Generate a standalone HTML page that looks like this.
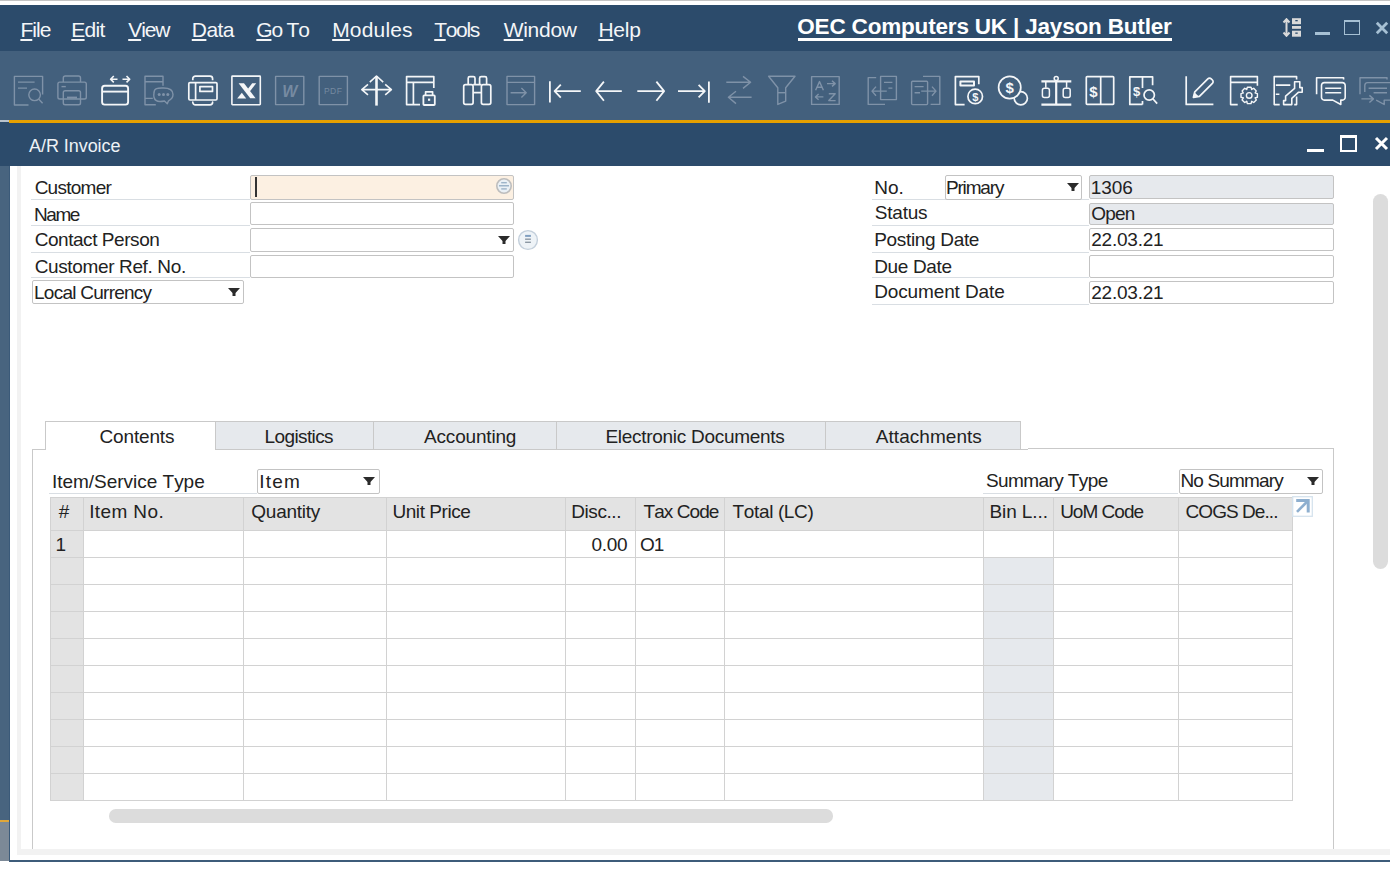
<!DOCTYPE html>
<html><head><meta charset="utf-8"><style>
html,body{margin:0;padding:0;}
body{width:1390px;height:872px;position:relative;overflow:hidden;background:#fff;font-family:"Liberation Sans", sans-serif;}
.a{position:absolute;}
.t{white-space:pre;line-height:1;font-kerning:none;}
.d{}
u{text-decoration:underline;text-underline-offset:2px;text-decoration-skip-ink:none;}
</style></head><body>
<div class="a" style="left:0px;top:0px;width:1390px;height:1px;background:#c4c4c4;"></div>
<div class="a" style="left:0px;top:1px;width:1390px;height:4px;background:#ffffff;"></div>
<div class="a" style="left:0px;top:5px;width:1390px;height:46px;background:#2c4b6b;"></div>
<div class="a" style="left:0px;top:51px;width:1390px;height:69px;background:#43607d;"></div>
<div class="a" style="left:0px;top:120px;width:9px;height:700px;background:#48647f;"></div>
<div class="a" style="left:0px;top:120px;width:9px;height:2px;background:#b9c3cc;"></div>
<div class="a" style="left:0px;top:820px;width:9px;height:2px;background:#e0a73a;"></div>
<div class="a" style="left:0px;top:822px;width:9px;height:39px;background:#7c8997;"></div>
<div class="a" style="left:0px;top:122px;width:1390px;height:44px;background:#2c4b6b;"></div>
<div class="a" style="left:9px;top:120px;width:1381px;height:3px;background:#e6a000;"></div>
<div class="a" style="left:9px;top:166px;width:1px;height:695px;background:#3b5a79;"></div>
<div class="a" style="left:9px;top:859.5px;width:1381px;height:2.5px;background:#3e5c7a;"></div>
<div class="a" style="left:10px;top:166px;width:1380px;height:693.5px;background:#ffffff;"></div>
<div class="a" style="left:17px;top:166px;width:4px;height:689px;background:#f2f2f2;"></div>
<div class="a" style="left:17px;top:849px;width:1373px;height:6px;background:#f2f2f2;"></div>
<div class="a" style="left:21px;top:166px;width:1369px;height:683px;background:#ffffff;"></div>
<div class="a t" style="left:20.38px;top:18.92px;font-size:21px;color:#f4f6f8;font-weight:normal;letter-spacing:-0.927px;"><u>F</u>ile</div>
<div class="a t" style="left:71.28px;top:18.92px;font-size:21px;color:#f4f6f8;font-weight:normal;letter-spacing:-0.703px;"><u>E</u>dit</div>
<div class="a t" style="left:128.21px;top:18.92px;font-size:21px;color:#f4f6f8;font-weight:normal;letter-spacing:-1.092px;"><u>V</u>iew</div>
<div class="a t" style="left:191.78px;top:18.92px;font-size:21px;color:#f4f6f8;font-weight:normal;letter-spacing:-0.545px;"><u>D</u>ata</div>
<div class="a t" style="left:256.34px;top:18.92px;font-size:21px;color:#f4f6f8;font-weight:normal;letter-spacing:-1.204px;"><u>G</u>o To</div>
<div class="a t" style="left:332.18px;top:18.92px;font-size:21px;color:#f4f6f8;font-weight:normal;letter-spacing:0.168px;"><u>M</u>odules</div>
<div class="a t" style="left:434.23px;top:18.92px;font-size:21px;color:#f4f6f8;font-weight:normal;letter-spacing:-1.330px;"><u>T</u>ools</div>
<div class="a t" style="left:503.71px;top:18.92px;font-size:21px;color:#f4f6f8;font-weight:normal;letter-spacing:-0.290px;"><u>W</u>indow</div>
<div class="a t" style="left:598.38px;top:18.92px;font-size:21px;color:#f4f6f8;font-weight:normal;letter-spacing:-0.195px;"><u>H</u>elp</div>
<div class="a t" style="left:797.28px;top:15.95px;font-size:22.5px;color:#ffffff;font-weight:bold;letter-spacing:-0.179px;">OEC Computers UK | Jayson Butler</div>
<div class="a" style="left:797.5px;top:38px;width:374.5px;height:2.6px;background:#ffffff;"></div>
<svg class="a" style="left:0;top:0" width="1390" height="120" viewBox="0 0 1390 120"><g fill="none" stroke="#7f92a8" stroke-width="1.4" stroke-linecap="butt" stroke-linejoin="round"><path d="M28.5 105 H14.4 V76.4 H42.6 V94.5"/><path d="M18 82.1H34.6M18 88.1H27"/><circle cx="34.6" cy="94.8" r="5.8"/><path d="M38.6 99 L42.6 103.2"/></g><g fill="none" stroke="#7f92a8" stroke-width="1.4" stroke-linecap="butt" stroke-linejoin="round"><path d="M63.3 82.1V78a2 2 0 0 1 2-2H78.5a2 2 0 0 1 2 2V82.1"/><rect x="57.9" y="82.1" width="28.4" height="16.9" rx="1.8"/><path d="M61.5 86.6H65.8"/><rect x="63.3" y="90.8" width="17.2" height="14" rx="1.8"/><path d="M67 97.6H77" stroke-width="2"/></g><g fill="none" stroke="#f4f6f8" stroke-width="1.9" stroke-linecap="butt" stroke-linejoin="round"><rect x="102.1" y="85.8" width="26" height="18.8" rx="2.6"/><path d="M102.1 91.6H128.1"/></g><g fill="none" stroke="#f4f6f8" stroke-width="1.6" stroke-linecap="butt" stroke-linejoin="round"><path d="M110.8 79.2H117.5M113.8 76L110.6 79.2L113.8 82.4M122.5 79.2H129.5M126.5 76L129.7 79.2L126.5 82.4"/></g><g fill="none" stroke="#7f92a8" stroke-width="1.4" stroke-linecap="butt" stroke-linejoin="round"><path d="M155.8 104.7H145V76.2H163V85.7M145 81.8H163M145 98.4H152.8"/><path d="M160 101.5 C152 101.5 154 93 154 93 C154 87.5 158.5 88 163.4 88 C169 88 173 89.5 173 94.5 C173 98 170.5 99.8 168.5 100.8 L167.3 103.8 L164.5 101 C163 101.3 161.5 101.5 160 101.5Z"/></g><g fill="#7f92a8"><circle cx="159.2" cy="94.6" r="1.5"/><circle cx="163.5" cy="94.6" r="1.5"/><circle cx="167.8" cy="94.6" r="1.5"/></g><g fill="none" stroke="#f4f6f8" stroke-width="1.7" stroke-linecap="butt" stroke-linejoin="round"><rect x="188.8" y="82.6" width="28.2" height="17.4" rx="1.2"/><path d="M195.6 82.6V100"/><rect x="199.9" y="86.6" width="12.6" height="4.8"/><path d="M192.8 80.2V78.8A2.6 2.6 0 0 1 195.4 76.2H210A2.6 2.6 0 0 1 212.6 78.8V80.2M192.8 102.4V102.2A2.6 2.6 0 0 0 195.4 104.8H210A2.6 2.6 0 0 0 212.6 102.2V102.4"/></g><g fill="none" stroke="#f4f6f8" stroke-width="1.6" stroke-linecap="butt" stroke-linejoin="round"><rect x="231.9" y="76.1" width="28.4" height="28.6" rx="0.6"/></g><path d="M238.6 83.2H244L255.6 98.2H250.2Z" fill="#f4f6f8"/><path d="M252.2 83.2H256.2L249.8 91.6L247.8 88.9Z" fill="#f4f6f8"/><path d="M237.2 98.4L241.8 92.8L246.2 98.4Z" fill="#f4f6f8"/><g fill="none" stroke="#7f92a8" stroke-width="1.4" stroke-linecap="butt" stroke-linejoin="round"><rect x="275.6" y="76.4" width="28.2" height="28.2"/></g><text x="289.8" y="96.6" font-family="Liberation Sans" font-weight="bold" font-style="italic" font-size="16" fill="#7f92a8" opacity="0.85" text-anchor="middle">W</text><g fill="none" stroke="#7f92a8" stroke-width="1.4" stroke-linecap="butt" stroke-linejoin="round"><rect x="319.2" y="76.4" width="28.2" height="28.2"/></g><text x="333.2" y="94" font-family="Liberation Sans" font-size="8.5" fill="#7f92a8" text-anchor="middle" letter-spacing="0.5" opacity="0.85">PDF</text><g fill="none" stroke="#f4f6f8" stroke-width="1.6" stroke-linecap="butt" stroke-linejoin="round"><path d="M361.8 89.6H391.4M368 84.4L361.8 89.6L368 94.8M385.2 84.4L391.4 89.6L385.2 94.8M369.8 82.2L376.5 76L383.2 82.2"/></g><g fill="none" stroke="#f4f6f8" stroke-width="2.6" stroke-linecap="butt" stroke-linejoin="round"><path d="M376.5 76.2V105.6"/></g><g fill="none" stroke="#f4f6f8" stroke-width="1.7" stroke-linecap="butt" stroke-linejoin="round"><path d="M420 104.6H406.6V76.6H433.8V88.1M406.6 82.4H433.8M413.4 82.4V104.6"/><path d="M425.6 95.4V91.8H432.6V95.4"/></g><rect x="423.4" y="95.4" width="11.4" height="9.6" rx="0.8" fill="none" stroke="#f4f6f8" stroke-width="1.8"/><rect x="428" y="98.6" width="2.2" height="2.2" fill="#f4f6f8"/><g fill="none" stroke="#f4f6f8" stroke-width="1.7" stroke-linecap="butt" stroke-linejoin="round"><rect x="463.7" y="84.6" width="9.4" height="19.8" rx="1.8"/><rect x="481.4" y="84.6" width="9.4" height="19.8" rx="1.8"/><path d="M468.2 84.6V78.2A1.6 1.6 0 0 1 469.8 76.6H473.4A1.6 1.6 0 0 1 475 78.2V84.6M479.6 84.6V78.2A1.6 1.6 0 0 1 481.2 76.6H485A1.6 1.6 0 0 1 486.6 78.2V84.6M473.1 84.6H481.4M473.1 92.7H481.4"/></g><g fill="none" stroke="#7f92a8" stroke-width="1.4" stroke-linecap="butt" stroke-linejoin="round"><rect x="507" y="76.4" width="27.6" height="28.2"/><path d="M507 82.4H534.6M510.6 92.7H526M521.4 88L526.2 92.7L521.4 97.4"/></g><g fill="none" stroke="#f4f6f8" stroke-width="1.8" stroke-linecap="butt" stroke-linejoin="round"><path d="M549.9 81.2V102.6M555 91.1H580.8M560.8 84.6L554.6 91.1L560.8 97.6"/></g><g fill="none" stroke="#f4f6f8" stroke-width="1.8" stroke-linecap="butt" stroke-linejoin="round"><path d="M596.2 91.1H621.8M603.9 81.6L596.2 91.1L603.9 100.8"/></g><g fill="none" stroke="#f4f6f8" stroke-width="1.8" stroke-linecap="butt" stroke-linejoin="round"><path d="M637.3 91.1H664.1M656.4 81.6L664.1 91.1L656.4 100.8"/></g><g fill="none" stroke="#f4f6f8" stroke-width="1.8" stroke-linecap="butt" stroke-linejoin="round"><path d="M678 91.1H705M698.6 84.8L704.8 91.1L698.6 97.4M708.9 81.4V102.7"/></g><g fill="none" stroke="#7f92a8" stroke-width="1.4" stroke-linecap="butt" stroke-linejoin="round"><path d="M726.3 82.3H751M743 76.4L750.6 82.3L743 88.4M751.6 97.3H728.4M736 91.3L728.4 97.3L736 103.6"/></g><g fill="none" stroke="#7f92a8" stroke-width="1.4" stroke-linecap="butt" stroke-linejoin="round"><path d="M768.6 76.3H795L785.7 87.8V101.1L777.8 104.4V87.8Z"/><path d="M777.8 92.7H785.7"/></g><g fill="none" stroke="#7f92a8" stroke-width="1.4" stroke-linecap="butt" stroke-linejoin="round"><rect x="811.6" y="76.6" width="27.6" height="27.8"/><path d="M815.6 90.2L819.5 81.6L823.4 90.2M817 87.2H822M827 83.6H835M832 80.8L835.2 83.6L832 86.4M823.4 96.9H815.6M818.6 94L815.4 96.9L818.6 99.8M828.8 93.8H835.2L828.8 100.6H835.6"/></g><g fill="none" stroke="#7f92a8" stroke-width="1.4" stroke-linecap="butt" stroke-linejoin="round"><path d="M876.2 77.6H868.2V104.4H885"/><rect x="880.6" y="76.4" width="15.8" height="23.2"/><path d="M884 82.4H892.4M888.4 88.1H892.4M872.4 91.1H886.8M876 86.6L872 91.1L876 95.8"/></g><g fill="none" stroke="#7f92a8" stroke-width="1.4" stroke-linecap="butt" stroke-linejoin="round"><rect x="911.6" y="81.2" width="16" height="23.4" rx="1"/><path d="M923 76.4H939.8V104.4H930.6M914.6 86.6H923.6M914.6 92.7H920M921.2 91.1H935.8M932 86.6L936 91.1L932 95.8"/></g><g fill="none" stroke="#f4f6f8" stroke-width="1.7" stroke-linecap="butt" stroke-linejoin="round"><path d="M964.6 104.6H955.4V76.6H978.8V84.2"/><circle cx="975.2" cy="96.4" r="7.3"/></g><g fill="none" stroke="#f4f6f8" stroke-width="2" stroke-linecap="butt" stroke-linejoin="round"><rect x="960.4" y="81.4" width="13.6" height="4"/></g><text x="975.3" y="100.6" font-family="Liberation Sans" font-weight="bold" font-size="11" fill="#f4f6f8" text-anchor="middle">$</text><g fill="none" stroke="#f4f6f8" stroke-width="1.7" stroke-linecap="butt" stroke-linejoin="round"><circle cx="1020.8" cy="98.2" r="6.6"/></g><circle cx="1009.7" cy="87.5" r="11.1" fill="#43607d" stroke="#f4f6f8" stroke-width="1.7"/><text x="1009.7" y="93.3" font-family="Liberation Sans" font-weight="bold" font-size="15" fill="#f4f6f8" text-anchor="middle">$</text><g fill="none" stroke="#f4f6f8" stroke-width="2.2" stroke-linecap="butt" stroke-linejoin="round"><path d="M1056.2 81V104.4M1041.4 81.4H1071.3M1041.4 104.6H1071.3"/></g><g fill="none" stroke="#f4f6f8" stroke-width="1.5" stroke-linecap="butt" stroke-linejoin="round"><circle cx="1056.2" cy="78.6" r="2"/><path d="M1045.8 81.4V87.8M1066.6 81.4V87.8"/><rect x="1042.4" y="88.2" width="7" height="9.2" rx="2"/><rect x="1063.2" y="88.2" width="7" height="9.2" rx="2"/></g><g fill="none" stroke="#f4f6f8" stroke-width="1.7" stroke-linecap="butt" stroke-linejoin="round"><rect x="1086.3" y="76.6" width="27.4" height="27.8" rx="0.8"/><path d="M1100.7 76.6V104.4"/></g><text x="1093.4" y="96.6" font-family="Liberation Sans" font-weight="bold" font-size="15" fill="#f4f6f8" text-anchor="middle">$</text><g fill="none" stroke="#f4f6f8" stroke-width="1.7" stroke-linecap="butt" stroke-linejoin="round"><path d="M1142.5 104.4H1129.8V76.8H1152.6V85.2M1142.5 76.8V88M1142.5 101V104.4"/><circle cx="1149.2" cy="95" r="5.2"/><path d="M1152.8 98.8L1157.2 103.6"/></g><text x="1136.5" y="96.2" font-family="Liberation Sans" font-weight="bold" font-size="13" fill="#f4f6f8" text-anchor="middle">$</text><g fill="none" stroke="#f4f6f8" stroke-width="1.7" stroke-linecap="butt" stroke-linejoin="round"><path d="M1186.2 76.2V104.4H1213.4"/><path d="M1193.4 97.4L1194.8 91.8L1207.8 78.8A2.4 2.4 0 0 1 1211.2 78.8L1212.4 80A2.4 2.4 0 0 1 1212.4 83.4L1199.4 96.4Z"/></g><path d="M1193 97.8L1194.4 92.2L1198.8 96.6Z" fill="#f4f6f8"/><g fill="none" stroke="#f4f6f8" stroke-width="1.6" stroke-linecap="butt" stroke-linejoin="round"><path d="M1237.7 104.6H1230.6V76.6H1257.4V85.7M1230.6 82.4H1257.4"/></g><g fill="none" stroke="#f4f6f8" stroke-width="1.4" stroke-linecap="butt" stroke-linejoin="round"><path d="M1257.40 93.57 L1257.40 97.23 L1255.09 97.89 L1255.13 97.81 L1256.29 99.90 L1253.70 102.49 L1251.61 101.33 L1251.69 101.29 L1251.03 103.60 L1247.37 103.60 L1246.71 101.29 L1246.79 101.33 L1244.70 102.49 L1242.11 99.90 L1243.27 97.81 L1243.31 97.89 L1241.00 97.23 L1241.00 93.57 L1243.31 92.91 L1243.27 92.99 L1242.11 90.90 L1244.70 88.31 L1246.79 89.47 L1246.71 89.51 L1247.37 87.20 L1251.03 87.20 L1251.69 89.51 L1251.61 89.47 L1253.70 88.31 L1256.29 90.90 L1255.13 92.99 L1255.09 92.91Z"/><circle cx="1249.2" cy="95.4" r="2.8"/></g><g fill="none" stroke="#f4f6f8" stroke-width="1.6" stroke-linecap="butt" stroke-linejoin="round"><path d="M1279.7 104.6H1274.2V76.6H1296.6V79.4M1294.2 104.6H1296.6V96.6M1275.8 85.1H1290.3M1275.8 94.2H1279.4"/><path d="M1283.6 104.6V100.6H1285.6V96.2L1294.6 88.4V81.8H1299.8V87.6H1302.2V92.2H1298.6L1291.8 98.4V104.6Z"/></g><g fill="none" stroke="#f4f6f8" stroke-width="1.6" stroke-linecap="butt" stroke-linejoin="round"><path d="M1316.6 94.2V77.8H1343.6V79.6"/><path d="M1324.3 82.6H1342.4A2.8 2.8 0 0 1 1345.2 85.4V97.3A2.8 2.8 0 0 1 1342.4 100.1H1340.8V104.5L1332.8 100.1H1324.3A2.8 2.8 0 0 1 1321.5 97.3V85.4A2.8 2.8 0 0 1 1324.3 82.6Z"/><path d="M1325.2 88.3H1341.2M1325.2 92.7H1341.2"/></g><g fill="none" stroke="#7f92a8" stroke-width="1.4" stroke-linecap="butt" stroke-linejoin="round"><path d="M1360 94.2V77.8H1387V79.6"/><path d="M1364.8 92V85.4A2.8 2.8 0 0 1 1367.6 82.6H1390M1390 100.1H1384.2V104.5L1376.2 100.1M1368.6 88.3H1387M1373.6 92.7H1387M1361.4 98.9H1373.2M1369.4 95.4L1373.4 98.9L1369.4 102.6"/></g></svg>
<div class="a t" style="left:29.06px;top:137.06px;font-size:18px;color:#eef2f6;font-weight:normal;letter-spacing:-0.060px;">A/R Invoice</div>
<div class="a t d" style="left:34.64px;top:177.62px;font-size:19px;color:#222222;font-weight:normal;letter-spacing:-0.739px;">Customer</div>
<div class="a t d" style="left:34.04px;top:204.62px;font-size:19px;color:#222222;font-weight:normal;letter-spacing:-1.460px;">Name</div>
<div class="a t d" style="left:34.64px;top:229.92px;font-size:19px;color:#222222;font-weight:normal;letter-spacing:-0.443px;">Contact Person</div>
<div class="a t d" style="left:34.64px;top:257.12px;font-size:19px;color:#222222;font-weight:normal;letter-spacing:-0.358px;">Customer Ref. No.</div>
<div class="a" style="left:31px;top:199px;width:218.5px;height:1px;background:#d9dee3;"></div>
<div class="a" style="left:31px;top:224.5px;width:218.5px;height:1px;background:#d9dee3;"></div>
<div class="a" style="left:31px;top:251.5px;width:218.5px;height:1px;background:#d9dee3;"></div>
<div class="a" style="left:31px;top:277px;width:218.5px;height:1px;background:#d9dee3;"></div>
<div class="a" style="left:249.5px;top:175px;width:264.5px;height:24.5px;background:#fcf0e2;border:1px solid #c3c3c3;box-sizing:border-box;border-radius:2px;"></div>
<div class="a" style="left:249.5px;top:202px;width:264.5px;height:23px;background:#ffffff;border:1px solid #c3c3c3;box-sizing:border-box;border-radius:2px;"></div>
<div class="a" style="left:249.5px;top:227.5px;width:264.5px;height:24.5px;background:#ffffff;border:1px solid #c3c3c3;box-sizing:border-box;border-radius:2px;"></div>
<div class="a" style="left:249.5px;top:254.5px;width:264.5px;height:23px;background:#ffffff;border:1px solid #c3c3c3;box-sizing:border-box;border-radius:2px;"></div>
<div class="a" style="left:255px;top:177px;width:1.5px;height:20px;background:#333333;"></div>
<div class="a" style="left:32px;top:280px;width:212px;height:24px;background:#ffffff;border:1px solid #c3c3c3;box-sizing:border-box;border-radius:2px;"></div>
<div class="a t d" style="left:34.04px;top:283.02px;font-size:19px;color:#222222;font-weight:normal;letter-spacing:-0.745px;">Local Currency</div>
<svg class="a" style="left:228.0px;top:288.0px" width="12" height="8" viewBox="0 0 12 8"><path d="M0 0H12L7.5 5V8H4.5V5Z" fill="#2b2b2b"/></svg>
<svg class="a" style="left:498.0px;top:235.5px" width="12" height="8" viewBox="0 0 12 8"><path d="M0 0H12L7.5 5V8H4.5V5Z" fill="#2b2b2b"/></svg>
<svg class="a" style="left:495px;top:177px" width="18" height="18" viewBox="-9 -9 18 18"><circle cx="0" cy="0" r="7.2" fill="#eaf0f5" stroke="#bdbdbd" stroke-width="1.6"/><rect x="-2.8" y="-4" width="5.6" height="1.4" fill="#9db4c9"/><rect x="-5" y="-1" width="10" height="1.5" fill="#9db4c9"/><rect x="-2.8" y="2.2" width="5.6" height="1.4" fill="#9db4c9"/></svg>
<svg class="a" style="left:517.3px;top:229.4px" width="22" height="22" viewBox="-11 -11 22 22"><circle cx="0" cy="0" r="9.4" fill="#eef3f7" stroke="#c3cfdb" stroke-width="1.4"/><rect x="-2.9" y="-5.1" width="5.8" height="2.0" fill="#809fc0"/><rect x="-2.9" y="-1.5" width="5.8" height="1.4" fill="#8c98a4"/><rect x="-2.9" y="1.6" width="5.8" height="1.4" fill="#8c98a4"/></svg>
<div class="a t d" style="left:874.14px;top:178.02px;font-size:19px;color:#222222;font-weight:normal;letter-spacing:0.063px;">No.</div>
<div class="a t d" style="left:874.84px;top:203.32px;font-size:19px;color:#222222;font-weight:normal;letter-spacing:-0.223px;">Status</div>
<div class="a t d" style="left:874.14px;top:229.72px;font-size:19px;color:#222222;font-weight:normal;letter-spacing:-0.317px;">Posting Date</div>
<div class="a t d" style="left:874.14px;top:256.62px;font-size:19px;color:#222222;font-weight:normal;letter-spacing:-0.324px;">Due Date</div>
<div class="a t d" style="left:874.14px;top:282.42px;font-size:19px;color:#222222;font-weight:normal;letter-spacing:-0.117px;">Document Date</div>
<div class="a" style="left:872px;top:199px;width:216.5px;height:1px;background:#d9dee3;"></div>
<div class="a" style="left:872px;top:224.5px;width:216.5px;height:1px;background:#d9dee3;"></div>
<div class="a" style="left:872px;top:251.5px;width:216.5px;height:1px;background:#d9dee3;"></div>
<div class="a" style="left:872px;top:277px;width:216.5px;height:1px;background:#d9dee3;"></div>
<div class="a" style="left:872px;top:303.5px;width:216.5px;height:1px;background:#d9dee3;"></div>
<div class="a" style="left:944.8px;top:175px;width:137.7px;height:24.5px;background:#ffffff;border:1px solid #c3c3c3;box-sizing:border-box;border-radius:2px;"></div>
<div class="a t d" style="left:945.94px;top:178.02px;font-size:19px;color:#222222;font-weight:normal;letter-spacing:-1.158px;">Primary</div>
<svg class="a" style="left:1067.0px;top:183.0px" width="12" height="8" viewBox="0 0 12 8"><path d="M0 0H12L7.5 5V8H4.5V5Z" fill="#2b2b2b"/></svg>
<div class="a" style="left:1088.5px;top:175px;width:245px;height:24px;background:#e6e9ed;border:1px solid #c3c3c3;box-sizing:border-box;border-radius:2px;"></div>
<div class="a" style="left:1088.5px;top:202.5px;width:245px;height:22px;background:#e6e9ed;border:1px solid #c3c3c3;box-sizing:border-box;border-radius:2px;"></div>
<div class="a" style="left:1088.5px;top:228.2px;width:245px;height:23px;background:#ffffff;border:1px solid #c3c3c3;box-sizing:border-box;border-radius:2px;"></div>
<div class="a" style="left:1088.5px;top:254.6px;width:245px;height:23px;background:#ffffff;border:1px solid #c3c3c3;box-sizing:border-box;border-radius:2px;"></div>
<div class="a" style="left:1088.5px;top:281.2px;width:245px;height:23px;background:#ffffff;border:1px solid #c3c3c3;box-sizing:border-box;border-radius:2px;"></div>
<div class="a t d" style="left:1090.75px;top:177.52px;font-size:19px;color:#222222;font-weight:normal;letter-spacing:-0.095px;">1306</div>
<div class="a t d" style="left:1091.30px;top:203.62px;font-size:19px;color:#222222;font-weight:normal;letter-spacing:-0.849px;">Open</div>
<div class="a t d" style="left:1091.24px;top:229.72px;font-size:19px;color:#222222;font-weight:normal;letter-spacing:-0.225px;">22.03.21</div>
<div class="a t d" style="left:1091.24px;top:282.62px;font-size:19px;color:#222222;font-weight:normal;letter-spacing:-0.225px;">22.03.21</div>
<div class="a" style="left:32px;top:449px;width:1px;height:400px;background:#c9c9c9;"></div>
<div class="a" style="left:1333px;top:448px;width:1px;height:401px;background:#c9c9c9;"></div>
<div class="a" style="left:32px;top:449px;width:14px;height:1px;background:#c9c9c9;"></div>
<div class="a" style="left:1019px;top:449px;width:9px;height:1px;background:#c9c9c9;"></div>
<div class="a" style="left:1028px;top:448px;width:306px;height:1px;background:#c9c9c9;"></div>
<div class="a" style="left:215px;top:421px;width:158.8px;height:29px;background:#e6e9ed;border:1px solid #c9c9c9;box-sizing:border-box;"></div>
<div class="a t d" style="left:264.54px;top:427.12px;font-size:19px;color:#222222;font-weight:normal;letter-spacing:-0.610px;">Logistics</div>
<div class="a" style="left:372.8px;top:421px;width:183.8px;height:29px;background:#e6e9ed;border:1px solid #c9c9c9;box-sizing:border-box;"></div>
<div class="a t d" style="left:424.06px;top:427.12px;font-size:19px;color:#222222;font-weight:normal;letter-spacing:-0.183px;">Accounting</div>
<div class="a" style="left:555.6px;top:421px;width:270.4px;height:29px;background:#e6e9ed;border:1px solid #c9c9c9;box-sizing:border-box;"></div>
<div class="a t d" style="left:605.44px;top:427.12px;font-size:19px;color:#222222;font-weight:normal;letter-spacing:-0.287px;">Electronic Documents</div>
<div class="a" style="left:825px;top:421px;width:196.20000000000005px;height:29px;background:#e6e9ed;border:1px solid #c9c9c9;box-sizing:border-box;"></div>
<div class="a t d" style="left:875.76px;top:427.12px;font-size:19px;color:#222222;font-weight:normal;letter-spacing:0.052px;">Attachments</div>
<div class="a" style="left:45px;top:421px;width:171px;height:29px;background:#ffffff;border-left:1px solid #c9c9c9;border-top:1px solid #c9c9c9;border-right:1px solid #c9c9c9;box-sizing:border-box;"></div>
<div class="a t d" style="left:99.54px;top:427.12px;font-size:19px;color:#222222;font-weight:normal;letter-spacing:-0.156px;">Contents</div>
<div class="a t d" style="left:51.95px;top:471.52px;font-size:19px;color:#222222;font-weight:normal;letter-spacing:-0.019px;">Item/Service Type</div>
<div class="a" style="left:49px;top:493px;width:208px;height:1px;background:#d9dee3;"></div>
<div class="a" style="left:257px;top:469px;width:123px;height:24.5px;background:#ffffff;border:1px solid #c3c3c3;box-sizing:border-box;border-radius:2px;"></div>
<div class="a t d" style="left:259.15px;top:471.72px;font-size:19px;color:#222222;font-weight:normal;letter-spacing:1.218px;">Item</div>
<svg class="a" style="left:363.3px;top:477.3px" width="12" height="8" viewBox="0 0 12 8"><path d="M0 0H12L7.5 5V8H4.5V5Z" fill="#2b2b2b"/></svg>
<div class="a t d" style="left:985.94px;top:471.12px;font-size:19px;color:#222222;font-weight:normal;letter-spacing:-0.591px;">Summary Type</div>
<div class="a" style="left:983px;top:493px;width:195px;height:1px;background:#d9dee3;"></div>
<div class="a" style="left:1178.5px;top:469px;width:144.5px;height:24.5px;background:#ffffff;border:1px solid #c3c3c3;box-sizing:border-box;border-radius:2px;"></div>
<div class="a t d" style="left:1180.44px;top:471.12px;font-size:19px;color:#222222;font-weight:normal;letter-spacing:-0.840px;">No Summary</div>
<svg class="a" style="left:1307.0px;top:477.0px" width="12" height="8" viewBox="0 0 12 8"><path d="M0 0H12L7.5 5V8H4.5V5Z" fill="#2b2b2b"/></svg>
<div class="a" style="left:50px;top:497.5px;width:1242.5px;height:33.200000000000045px;background:#e3e3e3;"></div>
<div class="a" style="left:50px;top:530.7px;width:33.3px;height:270.20000000000005px;background:#e3e3e3;"></div>
<div class="a" style="left:983.2px;top:557.72px;width:70.5px;height:243.18000000000004px;background:#e6e9ed;"></div>
<div class="a" style="left:49.5px;top:497.5px;width:1px;height:303.9000000000001px;background:#d2d2d2;"></div>
<div class="a" style="left:82.8px;top:497.5px;width:1px;height:303.9000000000001px;background:#d2d2d2;"></div>
<div class="a" style="left:243.2px;top:497.5px;width:1px;height:303.9000000000001px;background:#d2d2d2;"></div>
<div class="a" style="left:385.5px;top:497.5px;width:1px;height:303.9000000000001px;background:#d2d2d2;"></div>
<div class="a" style="left:564.7px;top:497.5px;width:1px;height:303.9000000000001px;background:#d2d2d2;"></div>
<div class="a" style="left:635.0px;top:497.5px;width:1px;height:303.9000000000001px;background:#d2d2d2;"></div>
<div class="a" style="left:723.7px;top:497.5px;width:1px;height:303.9000000000001px;background:#d2d2d2;"></div>
<div class="a" style="left:982.7px;top:497.5px;width:1px;height:303.9000000000001px;background:#d2d2d2;"></div>
<div class="a" style="left:1053.2px;top:497.5px;width:1px;height:303.9000000000001px;background:#d2d2d2;"></div>
<div class="a" style="left:1178.0px;top:497.5px;width:1px;height:303.9000000000001px;background:#d2d2d2;"></div>
<div class="a" style="left:1292.0px;top:497.5px;width:1px;height:303.9000000000001px;background:#d2d2d2;"></div>
<div class="a" style="left:50px;top:497.0px;width:1242.5px;height:1px;background:#d2d2d2;"></div>
<div class="a" style="left:50px;top:530.2px;width:1242.5px;height:1px;background:#d2d2d2;"></div>
<div class="a" style="left:50px;top:557.22px;width:1242.5px;height:1px;background:#d2d2d2;"></div>
<div class="a" style="left:50px;top:584.24px;width:1242.5px;height:1px;background:#d2d2d2;"></div>
<div class="a" style="left:50px;top:611.26px;width:1242.5px;height:1px;background:#d2d2d2;"></div>
<div class="a" style="left:50px;top:638.2800000000001px;width:1242.5px;height:1px;background:#d2d2d2;"></div>
<div class="a" style="left:50px;top:665.3000000000001px;width:1242.5px;height:1px;background:#d2d2d2;"></div>
<div class="a" style="left:50px;top:692.32px;width:1242.5px;height:1px;background:#d2d2d2;"></div>
<div class="a" style="left:50px;top:719.34px;width:1242.5px;height:1px;background:#d2d2d2;"></div>
<div class="a" style="left:50px;top:746.36px;width:1242.5px;height:1px;background:#d2d2d2;"></div>
<div class="a" style="left:50px;top:773.3800000000001px;width:1242.5px;height:1px;background:#d2d2d2;"></div>
<div class="a" style="left:50px;top:800.4000000000001px;width:1242.5px;height:1px;background:#d2d2d2;"></div>
<div class="a t d" style="left:58.72px;top:501.52px;font-size:19px;color:#222222;font-weight:normal;letter-spacing:0.000px;">#</div>
<div class="a t d" style="left:89.15px;top:501.52px;font-size:19px;color:#222222;font-weight:normal;letter-spacing:0.399px;">Item No.</div>
<div class="a t d" style="left:251.30px;top:501.52px;font-size:19px;color:#222222;font-weight:normal;letter-spacing:-0.246px;">Quantity</div>
<div class="a t d" style="left:392.43px;top:501.52px;font-size:19px;color:#222222;font-weight:normal;letter-spacing:-0.427px;">Unit Price</div>
<div class="a t d" style="left:571.24px;top:501.52px;font-size:19px;color:#222222;font-weight:normal;letter-spacing:-0.431px;">Disc...</div>
<div class="a t d" style="left:643.57px;top:501.52px;font-size:19px;color:#222222;font-weight:normal;letter-spacing:-0.943px;">Tax Code</div>
<div class="a t d" style="left:732.57px;top:501.52px;font-size:19px;color:#222222;font-weight:normal;letter-spacing:-0.362px;">Total (LC)</div>
<div class="a t d" style="left:989.54px;top:501.52px;font-size:19px;color:#222222;font-weight:normal;letter-spacing:-0.107px;">Bin L...</div>
<div class="a t d" style="left:1060.13px;top:501.52px;font-size:19px;color:#222222;font-weight:normal;letter-spacing:-0.987px;">UoM Code</div>
<div class="a t d" style="left:1185.54px;top:501.52px;font-size:19px;color:#222222;font-weight:normal;letter-spacing:-0.939px;">COGS De...</div>
<div class="a t d" style="left:55.55px;top:534.52px;font-size:19px;color:#222222;font-weight:normal;letter-spacing:0.000px;">1</div>
<div class="a t d" style="left:591.46px;top:534.62px;font-size:19px;color:#222222;font-weight:normal;letter-spacing:-0.265px;">0.00</div>
<div class="a t d" style="left:639.90px;top:534.62px;font-size:19px;color:#222222;font-weight:normal;letter-spacing:-3.818px;letter-spacing:-1px;">O1</div>
<svg class="a" style="left:1292px;top:495.5px" width="21" height="21" viewBox="0 0 21 21"><rect x="0.7" y="0.7" width="19.6" height="19.6" fill="#fff" stroke="#d6e3ee" stroke-width="1.3"/><path d="M4.2 4.6H16.2V16.4" fill="none" stroke="#8eafcf" stroke-width="3"/><path d="M15.8 5L5 15.8" fill="none" stroke="#8eafcf" stroke-width="2.6"/></svg>
<div class="a" style="left:109px;top:809px;width:724px;height:13.5px;background:#dcdcdc;border-radius:6.75px;border:none;"></div>
<div class="a" style="left:1373px;top:194px;width:15px;height:375px;background:#dcdcdc;border-radius:7.5px;border:none;"></div>
<div class="a" style="left:1307px;top:148.8px;width:16.5px;height:3.2px;background:#ffffff;"></div>
<div class="a" style="left:1340px;top:135px;width:16.5px;height:17px;border:2px solid #fff;border-top-width:3.6px;box-sizing:border-box;"></div>
<svg class="a" style="left:1373.7px;top:136.4px" width="15" height="15" viewBox="0 0 15 15"><path d="M2 2L13 13M13 2L2 13" stroke="#fff" stroke-width="3"/></svg>
<svg class="a" style="left:1282px;top:18px" width="20" height="19" viewBox="0 0 20 19"><path d="M4.5 1V18M1.5 4.5L4.5 1.2L7.5 4.5M1.5 14.5L4.5 17.8L7.5 14.5" fill="none" stroke="#d9d9d9" stroke-width="2"/><rect x="10" y="0.2" width="9" height="6" fill="#d9d9d9"/><rect x="10" y="8" width="9" height="2.8" fill="#d9d9d9"/><rect x="10" y="12.7" width="9" height="6" fill="#d9d9d9"/><rect x="13.3" y="2" width="2.4" height="1.3" fill="#2c4b6b"/><rect x="13.3" y="14.5" width="2.4" height="1.3" fill="#2c4b6b"/></svg>
<div class="a" style="left:1314.5px;top:32px;width:15px;height:3px;background:#a6c0d4;"></div>
<div class="a" style="left:1344.4px;top:20px;width:15.2px;height:15.2px;border:1.3px solid #a6c0d4;border-top-width:2.4px;box-sizing:border-box;"></div>
<svg class="a" style="left:1375px;top:20.5px" width="14" height="14" viewBox="0 0 14 14"><path d="M1.8 1.8L12.2 12.2M12.2 1.8L1.8 12.2" stroke="#a6c0d4" stroke-width="2.8"/></svg>
</body></html>
